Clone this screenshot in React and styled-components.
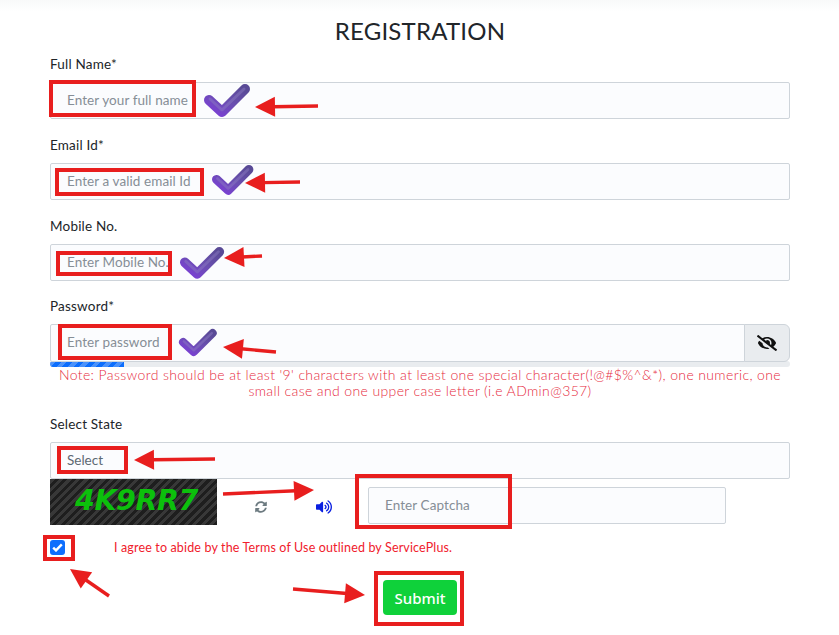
import styled, { createGlobalStyle } from "styled-components";
import { FaEyeSlash, FaSyncAlt, FaVolumeUp } from "react-icons/fa";

const GlobalStyle = createGlobalStyle`
  html, body {
    margin: 0;
    background: #fff;
    font-family: Lato, "Noto Sans", sans-serif;
  }
  * { box-sizing: border-box; }
`;

// red frames drawn over the form: x, y, w, h
const frames = [
  [51, 82, 143, 33],
  [57, 170, 145, 24],
  [58, 253, 112, 21],
  [60, 326, 110, 32],
  [59, 448, 67, 24],
  [357, 476, 153, 51],
  [45, 537, 28, 22],
  [376, 573, 86, 51],
];

// arrow shaft start -> tip
const arrows = [
  [318, 106, 255, 107],
  [300, 182, 245, 183],
  [262, 256, 224, 258],
  [276, 352, 223, 347],
  [215, 459, 134, 460],
  [223, 494, 314, 490],
  [109, 596, 70, 569],
  [293, 589, 365, 595],
];

const checks = [
  { x: 204, y: 84, s: 1 },
  { x: 212, y: 165, s: 0.9 },
  { x: 180, y: 247, s: 0.96 },
  { x: 179, y: 329, s: 0.82 },
];

const Arrow = ({ x1, y1, x2, y2 }) => {
  const angle = (Math.atan2(y2 - y1, x2 - x1) * 180) / Math.PI;
  const length = Math.hypot(x2 - x1, y2 - y1);
  return (
    <g transform={`translate(${x1} ${y1}) rotate(${angle})`}>
      <rect x="0" y="-1.7" width={length - 18} height="3.4" fill="#e81e1e" />
      <polygon points={`${length},0 ${length - 20},-10 ${length - 20},10`} fill="#e81e1e" />
    </g>
  );
};

const Annotations = () => (
  <Overlay width="839" height="635" viewBox="0 0 839 635">
    <defs>
      <linearGradient id="tick" x1="0" y1="1" x2="1" y2="0">
        <stop offset="0" stopColor="#7b3fd6" />
        <stop offset="0.5" stopColor="#6a4fb0" />
        <stop offset="1" stopColor="#594a96" />
      </linearGradient>
    </defs>
    {checks.map((c) => (
      <g key={c.y} transform={`translate(${c.x} ${c.y}) scale(${c.s})`} fill="none" strokeLinecap="round" strokeLinejoin="round">
        <path d="M5 16 L18 28 L41 5" stroke="url(#tick)" strokeWidth="10" />
        <path d="M6 15 L18 26 L40 5" stroke="#8f7fc4" strokeOpacity="0.45" strokeWidth="3" />
      </g>
    ))}
    {frames.map(([x, y, w, h]) => (
      <rect key={`${x}-${y}`} x={x} y={y} width={w} height={h} fill="none" stroke="#e81e1e" strokeWidth="4" />
    ))}
    {arrows.map(([x1, y1, x2, y2]) => (
      <Arrow key={`${x1}-${y1}`} x1={x1} y1={y1} x2={x2} y2={y2} />
    ))}
  </Overlay>
);

const App = () => {
  return (
    <Page>
      <GlobalStyle />
      <Title>REGISTRATION</Title>
      <Field>
        <Label>Full Name*</Label>
        <Input placeholder="Enter your full name" />
      </Field>
      <Field>
        <Label>Email Id*</Label>
        <Input placeholder="Enter a valid email Id" />
      </Field>
      <Field>
        <Label>Mobile No.</Label>
        <Input placeholder="Enter Mobile No." />
      </Field>
      <PasswordField>
        <Label>Password*</Label>
        <InputGroup>
          <GroupInput placeholder="Enter password" />
          <EyeButton>
            <FaEyeSlash size={20} />
          </EyeButton>
        </InputGroup>
        <Progress>
          <ProgressBar />
        </Progress>
      </PasswordField>
      <Note>
        Note: Password should be at least '9' characters with at least one special character(!@#$%^&*), one numeric, one
        small case and one upper case letter (i.e ADmin@357)
      </Note>
      <SelectField>
        <Label>Select State</Label>
        <SelectBox>Select</SelectBox>
      </SelectField>
      <CaptchaRow>
        <CaptchaImage>4K9RR7</CaptchaImage>
        <CaptchaIcon $color="#6c7a80" $gap={22}>
          <FaSyncAlt size={12} />
        </CaptchaIcon>
        <CaptchaIcon $color="#0a1fe0" $gap={19}>
          <FaVolumeUp size={16} />
        </CaptchaIcon>
        <CaptchaInput placeholder="Enter Captcha" />
      </CaptchaRow>
      <TermsRow>
        <CheckBox>
          <svg width="11" height="9" viewBox="0 0 11 9">
            <path d="M1.2 4.6 L4 7.4 L9.8 1.4" fill="none" stroke="#fff" strokeWidth="2.4" />
          </svg>
        </CheckBox>
        <Terms>I agree to abide by the Terms of Use outlined by ServicePlus.</Terms>
      </TermsRow>
      <SubmitRow>
        <Submit>Submit</Submit>
      </SubmitRow>
      <Annotations />
    </Page>
  );
};

export default App;

const Page = styled.div`
  position: relative;
  width: 839px;
  height: 635px;
  overflow: hidden;
  padding: 0 49px 0 50px;
  background: linear-gradient(#f8f9f9 0, #fff 12px);
  color: #212529;
`;
const Overlay = styled.svg`
  position: absolute;
  top: 0;
  left: 0;
  pointer-events: none;
`;
const Title = styled.h2`
  margin: 0;
  padding-top: 16px;
  height: 52px;
  font-size: 24px;
  line-height: 29px;
  font-weight: 400;
  text-align: center;
  letter-spacing: 0.2px;
`;
const Field = styled.div`
  height: 81px;
`;
const PasswordField = styled.div`
  height: 62px;
  margin-top: -1px;
`;
const SelectField = styled.div`
  margin-top: 13px;
`;
const Label = styled.div`
  height: 30px;
  padding-top: 4px;
  font-size: 13.5px;
  line-height: 16px;
  letter-spacing: 0.2px;
`;
const Input = styled.input`
  display: block;
  width: 100%;
  height: 37px;
  padding: 0 16px 2px;
  background: #fbfcfe;
  border: 1px solid #ced4da;
  border-radius: 2px;
  font-family: inherit;
  font-size: 13.5px;
  letter-spacing: 0.08px;
  &::placeholder {
    color: #868e96;
    opacity: 1;
  }
`;
const InputGroup = styled.div`
  display: flex;
  height: 38px;
`;
const GroupInput = styled(Input)`
  flex: 1;
  height: 100%;
  padding-bottom: 3px;
  border-radius: 2px 0 0 2px;
`;
const EyeButton = styled.div`
  display: flex;
  align-items: center;
  justify-content: center;
  width: 46px;
  margin-left: -1px;
  background: #e9ecef;
  border: 1px solid #ced4da;
  border-radius: 0 6px 6px 0;
  color: #111;
`;
const Progress = styled.div`
  height: 6px;
  margin-top: -1px;
  background: #e9ecef;
  border-radius: 3px;
  overflow: hidden;
`;
const ProgressBar = styled.div`
  width: 74px;
  height: 100%;
  background: repeating-linear-gradient(-45deg, #0d6efd 0 4px, #4b92fb 4px 8px);
`;
const Note = styled.div`
  margin-top: 11px;
  font-size: 14px;
  font-weight: 300;
  line-height: 16px;
  text-align: center;
  color: #e62a40;
  letter-spacing: 0.37px;
`;
const SelectBox = styled.div`
  height: 37px;
  padding: 0 16px;
  background: #fbfcfe;
  border: 1px solid #ced4da;
  border-radius: 2px;
  font-size: 13.5px;
  line-height: 35px;
  color: #5d6872;
`;
const CaptchaRow = styled.div`
  display: flex;
  align-items: flex-start;
`;
const CaptchaImage = styled.div`
  width: 167px;
  height: 46px;
  padding-left: 6px;
  background: repeating-linear-gradient(-45deg, #1e1e1e 0 3px, #383838 3px 6px);
  color: #0cc00c;
  font-family: "DejaVu Sans", sans-serif;
  font-size: 28.5px;
  font-style: italic;
  font-weight: 700;
  line-height: 44px;
  text-align: center;
  letter-spacing: -0.4px;
`;
const CaptchaIcon = styled.div`
  display: flex;
  align-items: center;
  justify-content: center;
  flex: none;
  width: 44px;
  height: 16px;
  margin-top: 20px;
  margin-left: ${(p) => p.$gap}px;
  color: ${(p) => p.$color};
`;
const CaptchaInput = styled(Input)`
  width: 358px;
  margin-top: 8px;
  margin-left: 22px;
`;
const TermsRow = styled.div`
  display: flex;
  align-items: center;
  height: 18px;
  margin-top: 13px;
`;
const CheckBox = styled.div`
  display: flex;
  align-items: center;
  justify-content: center;
  width: 15px;
  height: 15px;
  background: #0d6efd;
  border-radius: 3px;
`;
const Terms = styled.div`
  margin-left: 49px;
  font-size: 12.5px;
  letter-spacing: 0.15px;
  color: #f0202c;
`;
const SubmitRow = styled.div`
  display: flex;
  justify-content: center;
  margin-top: 24px;
`;
const Submit = styled.div`
  display: flex;
  align-items: center;
  justify-content: center;
  width: 74px;
  height: 35px;
  background: #0fd13a;
  border-radius: 4px;
  color: #fff;
  font-family: "Noto Sans", sans-serif;
  font-size: 15px;
  font-weight: 500;
`;
